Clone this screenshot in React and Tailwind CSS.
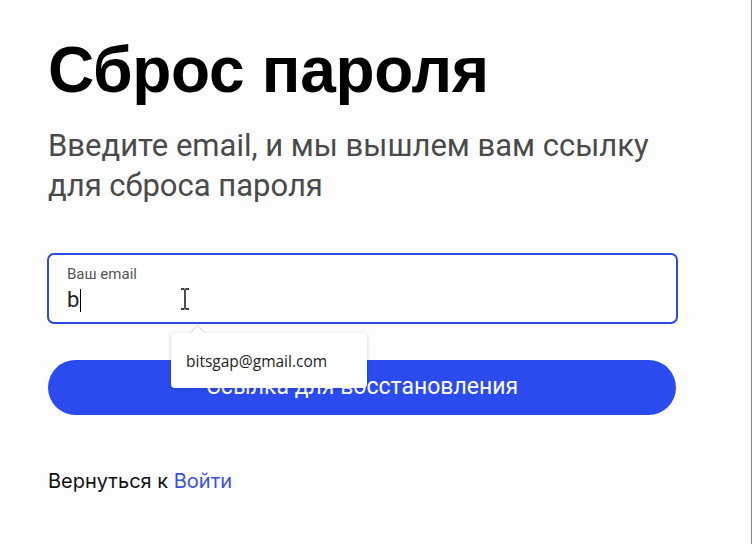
export default function App() {
  return (
    <div className="h-[544px] w-full overflow-hidden border-r border-[#8a8a8a] bg-[#fdfdfd]">
      <div className="w-[628px] ml-12 pt-[28px]">
        <h1 className="text-[64px] leading-[84px] font-bold text-black font-['Liberation_Sans',Arial,sans-serif] tracking-[-0.3px]">
          Сброс пароля
        </h1>
        <p className="mt-[14px] text-[31px] leading-[40px] text-[#4a4a4a] font-['Roboto',sans-serif]">
          Введите email, и мы вышлем вам ссылку для сброса пароля
        </p>

        <div className="relative mt-[47px]">
          <div className="h-[71px] -ml-px w-[631px] rounded-[7px] border-2 border-[#2d4ae0] bg-white px-[18px] pt-[10px] font-['Roboto',sans-serif]">
            <div className="text-[15px] leading-[18px] text-[#555]">Ваш email</div>
            <div className="flex items-center text-[22px] leading-[26px] text-[#222] mt-[4px]">
              b<span className="ml-px inline-block h-[23px] w-px bg-black" />
            </div>
          </div>
          <svg className="absolute left-[132px] top-[35px]" width="10" height="22" viewBox="0 0 10 22">
            <path d="M1 1h3M6 1h3M5 1v20M1 21h3M6 21h3" stroke="#fff" strokeWidth="3" fill="none" />
            <path d="M1 1h3.5M5.5 1h3.5M5 1.5v19M1 21h3.5M5.5 21h3.5" stroke="#000" strokeWidth="1.4" fill="none" />
          </svg>

          <button className="mt-[36px] flex h-[55px] w-[628px] items-center justify-center rounded-full bg-[#2b4bef] text-[23px] text-white font-['Roboto',sans-serif]">
            Ссылка для восстановления
          </button>

          <div className="absolute left-[123px] top-[80px] w-[196px] h-[55px] rounded-[4px] bg-white shadow-[0_1px_4px_rgba(0,0,0,0.18)] flex items-center pl-[15px] pt-[2px] text-[15.5px] text-[#222] font-['Open_Sans',sans-serif]">
            <div className="absolute -top-[6px] left-[21px] h-[11px] w-[11px] rotate-45 bg-white border-l border-t border-[#ddd]" />
            bitsgap@gmail.com
          </div>
        </div>

        <div className="mt-[51px] text-[20px] text-[#111] font-['Inter',sans-serif]">
          Вернуться к <span className="text-[#3b4fe0]">Войти</span>
        </div>
      </div>
    </div>
  );
}
